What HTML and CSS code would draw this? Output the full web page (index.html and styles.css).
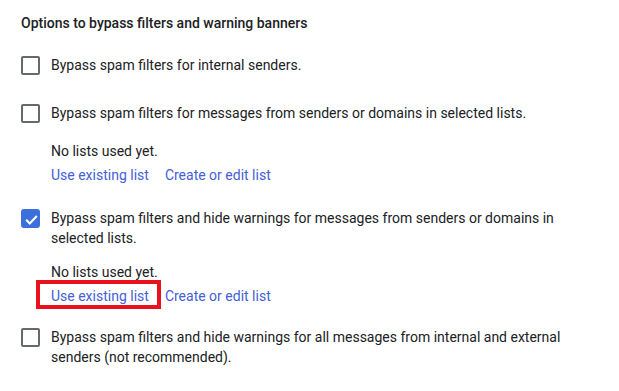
FILE: index.html
```html
<!DOCTYPE html>
<html lang="en">
<head>
  <meta charset="utf-8" />
  <title>Spam – bypass options</title>
  <link rel="stylesheet" href="styles.css">
</head>
<body>
  <main class="panel">
    <h2 class="panel-title">Options to bypass filters and warning banners</h2>

    <!-- internal senders -->
    <div class="option option--first">
      <span class="checkbox"></span>
      <div class="option-body">
        <p class="option-label">Bypass spam filters for internal senders.</p>
      </div>
    </div>

    <!-- approved lists -->
    <div class="option">
      <span class="checkbox"></span>
      <div class="option-body">
        <p class="option-label">Bypass spam filters for messages from senders or domains in selected lists.</p>
        <div class="lists lists--wide">
          <p class="lists-empty">No lists used yet.</p>
          <div class="lists-actions">
            <a href="#">Use existing list</a>
            <a href="#">Create or edit list</a>
          </div>
        </div>
      </div>
    </div>

    <!-- approved lists, no warnings -->
    <div class="option option--tight">
      <span class="checkbox is-checked">
        <svg viewBox="0 0 24 24" aria-hidden="true"><path d="M4.5 12.5l5 5L19.5 7"/></svg>
      </span>
      <div class="option-body">
        <p class="option-label">Bypass spam filters and hide warnings for messages from senders or domains in selected lists.</p>
        <div class="lists">
          <p class="lists-empty">No lists used yet.</p>
          <div class="lists-actions">
            <a href="#" class="is-marked">Use existing list</a>
            <a href="#">Create or edit list</a>
          </div>
        </div>
      </div>
    </div>

    <!-- everyone -->
    <div class="option option--last">
      <span class="checkbox"></span>
      <div class="option-body">
        <p class="option-label">Bypass spam filters and hide warnings for all messages from internal and external senders (not recommended).</p>
      </div>
    </div>
  </main>
</body>
</html>
```

FILE: styles.css
```css
/* ── base ── */
*,*::before,*::after{box-sizing:border-box;margin:0;padding:0;}

:root{
  --c-text:#202124;
  --c-link:#4460d6;
  --c-box:#666a6e;
  --c-check:#3a6fdc;
  --c-mark:#e8121f;
}

body{
  font-family:Roboto,"Liberation Sans",Arial,sans-serif;
  font-size:14px;line-height:20px;
  color:var(--c-text);background:#fff;
}

/* ── layout ── */
.panel{padding:13px 0 0 21px;width:597px;}

.panel-title{font-size:14px;font-weight:500;line-height:20px;}

.option{display:flex;gap:11px;margin-top:28px;}
.option--first{margin-top:22px;}
.option--tight{margin-top:23px;}
.option--last{margin-top:21px;}

.option-body{flex:1;min-width:0;}

/* ── checkbox ── */
.checkbox{
  flex:none;width:19px;height:19px;margin-top:1px;
  border:2px solid var(--c-box);border-radius:2px;
  display:grid;place-items:center;
}
.checkbox.is-checked{background:var(--c-check);border-color:var(--c-check);border-radius:3px;}
.checkbox svg{width:17px;height:17px;fill:none;stroke:#fff;stroke-width:3;}

/* ── list links ── */
.lists{margin-top:14px;}
.lists--wide{margin-top:18px;}
.lists-actions{display:flex;gap:16px;margin-top:4px;}
.lists-actions a{color:var(--c-link);text-decoration:none;position:relative;}

/* annotation box drawn over the link */
.lists-actions a.is-marked::after{
  content:"";position:absolute;inset:-6px -12px -3px -15px;
  border:4px solid var(--c-mark);pointer-events:none;
}
```
